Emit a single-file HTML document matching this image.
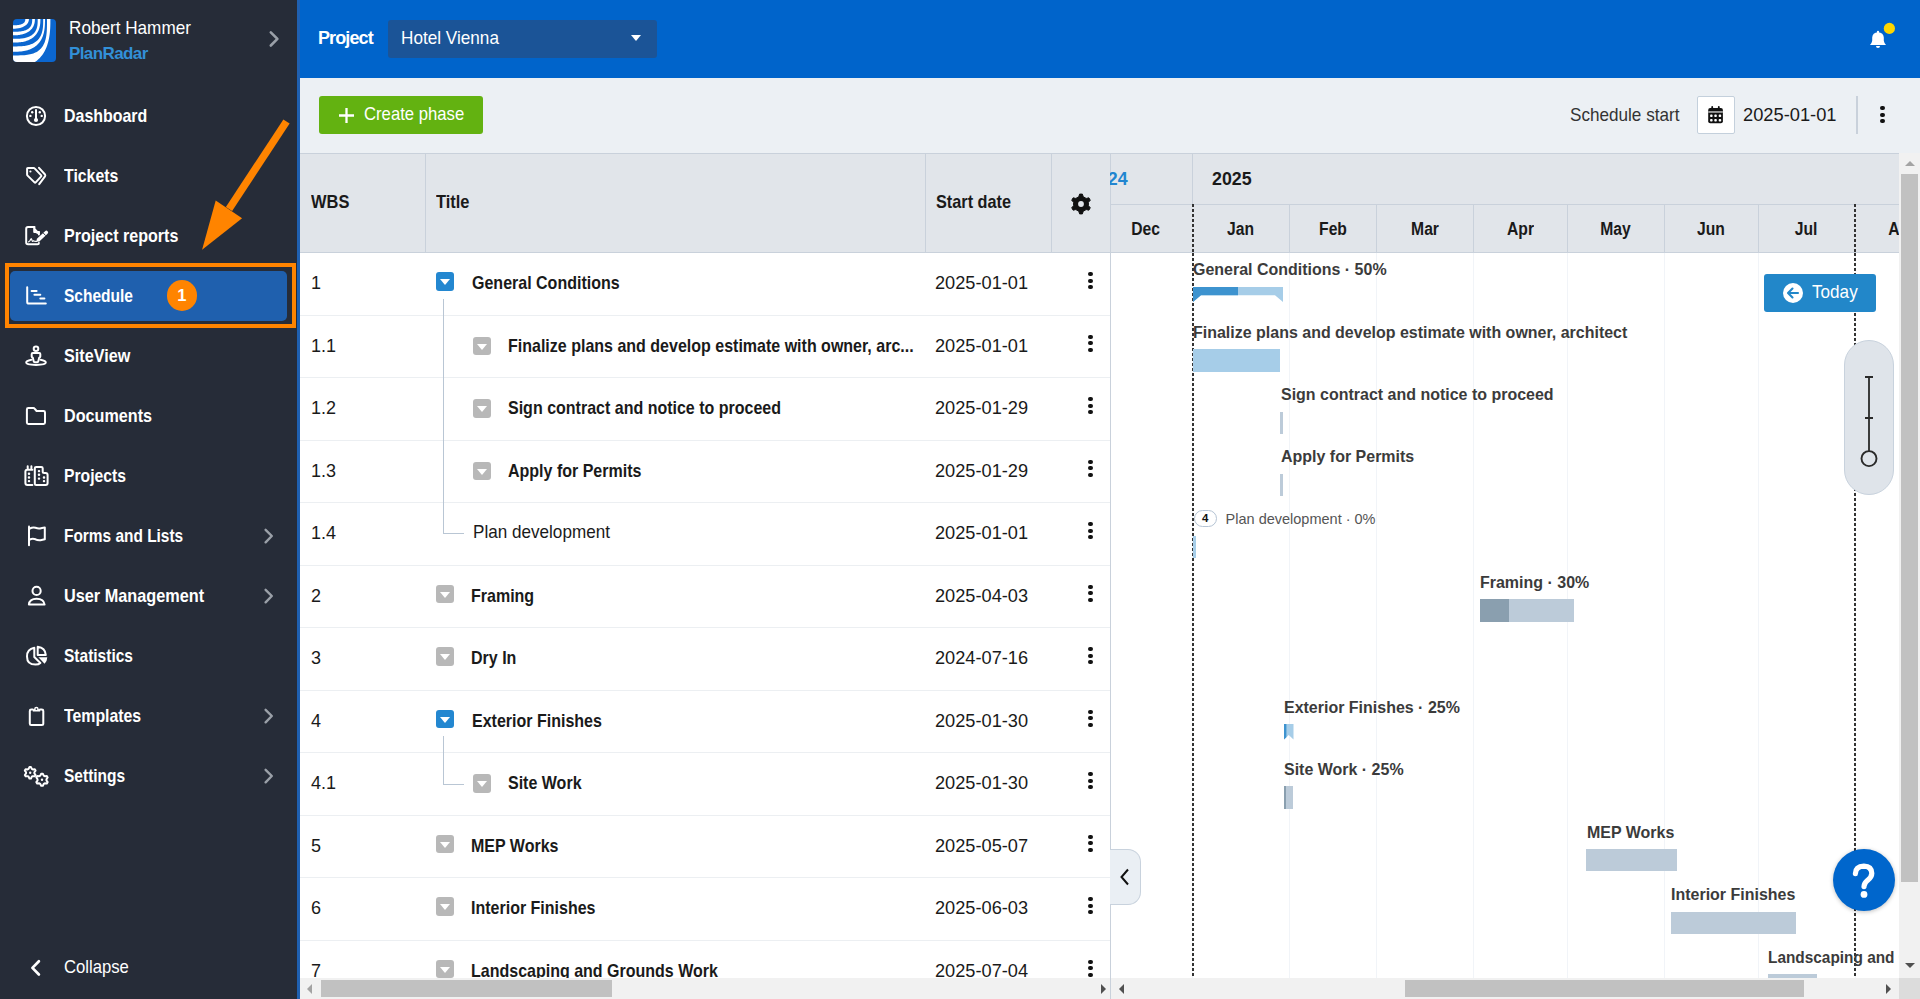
<!DOCTYPE html><html><head><meta charset="utf-8"><style>
*{box-sizing:border-box;margin:0;padding:0}
html,body{width:1920px;height:999px;overflow:hidden;font-family:"Liberation Sans",sans-serif;background:#fff;color:#1a1a1a}
.a{position:absolute}
.t{position:absolute;white-space:nowrap;line-height:20px;font-size:17px}
.b{font-weight:bold;letter-spacing:-0.45px}
.nav{position:absolute;left:64px;color:#fff;font-size:18.5px;font-weight:bold;line-height:20px;white-space:nowrap;transform-origin:0 0}
.ic{position:absolute;left:20px;width:32px;height:32px}
.vl{position:absolute;width:1px;background:#c9d1db}
.cb{position:absolute;width:18px;height:18.8px;border-radius:3px;background:#b8b8b8}
.cb.on{background:#2387d0}
.cb::after{content:"";position:absolute;left:3.5px;top:7px;border-left:5.5px solid transparent;border-right:5.5px solid transparent;border-top:6.3px solid #fff}
.kb{position:absolute;left:1088px;width:5px;height:18px}
.kb i{position:absolute;left:0.4px;width:4.2px;height:4.2px;border-radius:50%;background:#111}
.gl{position:absolute;font-size:17px;line-height:20px;color:#3b3b3b;font-weight:bold;letter-spacing:-0.5px;white-space:nowrap}
.bar{position:absolute;background:#bccbd9}
</style></head><body>
<div class="a" style="left:0;top:0;width:297px;height:999px;background:#262c38"></div>
<div class="a" style="left:297px;top:0;width:3px;height:999px;background:#1f60b0"></div>
<div class="a" style="left:13px;top:19px;width:43px;height:43px;border-radius:4px;background:#0b66cf;overflow:hidden"><svg width="43" height="43" viewBox="0 0 43 43"><path d="M15.90 0.00 L15.89 0.51 L15.86 0.96 L15.80 1.39 L15.72 1.80 L15.62 2.20 L15.50 2.58 L15.36 2.96 L15.19 3.34 L15.00 3.70 L14.80 4.05 L14.57 4.40 L14.32 4.73 L14.05 5.06 L13.75 5.38 L13.44 5.68 L13.11 5.98 L12.76 6.27 L12.40 6.55 L12.01 6.82 L11.60 7.08 L11.18 7.33 L10.74 7.56 L10.28 7.79 L9.81 8.00 L9.32 8.20 L8.81 8.39 L8.29 8.57 L7.76 8.73 L7.21 8.89 L6.64 9.03 L6.06 9.15 L5.47 9.27 L4.86 9.37 L4.24 9.46 L3.60 9.53 L2.94 9.59 L2.27 9.64 L1.57 9.67 L0.84 9.69 L0.00 9.70 L0.00 6.30 L1.02 6.30 L1.74 6.29 L2.37 6.27 L2.95 6.24 L3.50 6.21 L4.02 6.17 L4.51 6.12 L4.98 6.06 L5.44 6.00 L5.88 5.93 L6.30 5.85 L6.70 5.76 L7.09 5.67 L7.47 5.57 L7.83 5.47 L8.17 5.35 L8.51 5.23 L8.82 5.10 L9.13 4.97 L9.42 4.83 L9.70 4.68 L9.96 4.52 L10.21 4.36 L10.45 4.19 L10.67 4.01 L10.88 3.82 L11.07 3.63 L11.26 3.43 L11.42 3.22 L11.57 3.01 L11.71 2.79 L11.83 2.55 L11.94 2.31 L12.04 2.06 L12.12 1.79 L12.18 1.51 L12.23 1.21 L12.27 0.89 L12.29 0.52 L12.30 0.00 Z" fill="#fff"/><path d="M21.90 0.00 L21.89 1.04 L21.84 1.87 L21.77 2.64 L21.67 3.36 L21.54 4.06 L21.38 4.73 L21.20 5.37 L20.98 6.00 L20.74 6.61 L20.47 7.20 L20.18 7.77 L19.85 8.32 L19.50 8.86 L19.12 9.38 L18.72 9.88 L18.29 10.37 L17.83 10.84 L17.35 11.29 L16.84 11.72 L16.31 12.14 L15.75 12.53 L15.17 12.91 L14.56 13.27 L13.93 13.61 L13.28 13.93 L12.60 14.23 L11.91 14.51 L11.18 14.78 L10.44 15.02 L9.67 15.24 L8.88 15.44 L8.06 15.62 L7.22 15.78 L6.35 15.92 L5.45 16.03 L4.52 16.13 L3.54 16.20 L2.51 16.26 L1.39 16.29 L0.00 16.30 L0.00 12.80 L1.90 12.79 L3.12 12.77 L4.16 12.74 L5.10 12.69 L5.97 12.62 L6.79 12.55 L7.56 12.45 L8.30 12.35 L9.00 12.23 L9.67 12.10 L10.31 11.95 L10.92 11.79 L11.51 11.61 L12.08 11.42 L12.62 11.22 L13.14 11.00 L13.63 10.77 L14.11 10.53 L14.56 10.27 L14.99 9.99 L15.40 9.71 L15.79 9.40 L16.16 9.09 L16.50 8.76 L16.83 8.41 L17.13 8.05 L17.42 7.67 L17.68 7.28 L17.92 6.87 L18.14 6.45 L18.34 6.00 L18.52 5.53 L18.68 5.04 L18.82 4.53 L18.94 3.98 L19.03 3.40 L19.10 2.77 L19.16 2.08 L19.19 1.27 L19.20 0.00 Z" fill="#fff"/><path d="M27.40 0.00 L27.38 1.77 L27.33 3.08 L27.25 4.26 L27.13 5.35 L26.98 6.38 L26.79 7.37 L26.57 8.31 L26.32 9.22 L26.04 10.10 L25.72 10.94 L25.37 11.76 L24.98 12.55 L24.57 13.31 L24.12 14.04 L23.64 14.75 L23.13 15.43 L22.58 16.08 L22.01 16.71 L21.40 17.31 L20.77 17.89 L20.10 18.43 L19.40 18.96 L18.67 19.45 L17.91 19.92 L17.12 20.36 L16.30 20.77 L15.45 21.16 L14.57 21.52 L13.65 21.85 L12.71 22.15 L11.73 22.43 L10.71 22.67 L9.65 22.89 L8.56 23.08 L7.41 23.24 L6.21 23.37 L4.94 23.47 L3.58 23.54 L2.06 23.59 L0.00 23.60 L0.00 19.80 L2.65 19.79 L4.27 19.76 L5.64 19.71 L6.87 19.63 L8.00 19.54 L9.06 19.42 L10.05 19.28 L10.99 19.13 L11.88 18.95 L12.74 18.75 L13.55 18.53 L14.33 18.29 L15.07 18.02 L15.79 17.74 L16.47 17.43 L17.12 17.11 L17.75 16.76 L18.34 16.39 L18.91 16.00 L19.45 15.59 L19.96 15.16 L20.45 14.70 L20.91 14.22 L21.34 13.72 L21.75 13.20 L22.13 12.65 L22.48 12.08 L22.81 11.49 L23.11 10.86 L23.39 10.21 L23.64 9.53 L23.86 8.81 L24.06 8.06 L24.23 7.26 L24.37 6.41 L24.49 5.51 L24.58 4.52 L24.65 3.42 L24.69 2.12 L24.70 0.00 Z" fill="#fff"/><path d="M32.00 0.00 L31.98 2.97 L31.93 4.96 L31.84 6.70 L31.71 8.27 L31.54 9.75 L31.34 11.13 L31.11 12.45 L30.83 13.70 L30.52 14.90 L30.18 16.05 L29.80 17.16 L29.38 18.22 L28.92 19.24 L28.44 20.22 L27.91 21.16 L27.35 22.06 L26.76 22.92 L26.12 23.75 L25.46 24.54 L24.75 25.30 L24.02 26.01 L23.24 26.70 L22.43 27.34 L21.59 27.95 L20.70 28.52 L19.78 29.06 L18.83 29.56 L17.83 30.02 L16.79 30.45 L15.71 30.84 L14.58 31.19 L13.41 31.51 L12.18 31.79 L10.89 32.03 L9.54 32.23 L8.10 32.40 L6.55 32.53 L4.86 32.63 L2.91 32.68 L0.00 32.70 L0.00 27.40 L3.49 27.39 L5.53 27.34 L7.25 27.27 L8.77 27.17 L10.16 27.05 L11.45 26.89 L12.66 26.71 L13.80 26.50 L14.89 26.26 L15.92 25.99 L16.90 25.70 L17.84 25.37 L18.74 25.02 L19.59 24.64 L20.41 24.23 L21.19 23.79 L21.94 23.32 L22.65 22.83 L23.33 22.30 L23.97 21.75 L24.58 21.16 L25.16 20.55 L25.71 19.90 L26.22 19.23 L26.70 18.52 L27.16 17.77 L27.58 17.00 L27.96 16.19 L28.32 15.33 L28.65 14.44 L28.94 13.51 L29.21 12.52 L29.44 11.49 L29.64 10.39 L29.81 9.22 L29.95 7.95 L30.06 6.57 L30.14 5.02 L30.18 3.17 L30.20 0.00 Z" fill="#fff"/><path d="M37.40 0.00 L37.38 3.98 L37.31 6.78 L37.20 9.25 L37.05 11.52 L36.85 13.65 L36.60 15.68 L36.32 17.60 L35.98 19.45 L35.61 21.22 L35.19 22.93 L34.73 24.57 L34.22 26.15 L33.67 27.67 L33.08 29.13 L32.45 30.54 L31.77 31.89 L31.06 33.19 L30.29 34.44 L29.49 35.63 L28.65 36.77 L27.76 37.85 L26.83 38.88 L25.86 39.86 L24.85 40.78 L23.80 41.65 L22.70 42.46 L21.56 43.22 L20.37 43.92 L19.14 44.57 L17.86 45.16 L16.54 45.70 L15.15 46.18 L13.72 46.61 L12.21 46.98 L10.64 47.29 L8.98 47.54 L7.20 47.74 L5.28 47.89 L3.10 47.97 L0.00 48.00 L0.00 36.40 L5.06 36.38 L7.61 36.33 L9.65 36.25 L11.42 36.14 L13.00 35.99 L14.45 35.80 L15.79 35.59 L17.04 35.34 L18.22 35.06 L19.32 34.74 L20.37 34.39 L21.37 34.01 L22.31 33.59 L23.21 33.14 L24.06 32.66 L24.87 32.13 L25.64 31.58 L26.38 30.98 L27.07 30.35 L27.73 29.69 L28.35 28.98 L28.94 28.24 L29.49 27.45 L30.01 26.63 L30.50 25.76 L30.96 24.85 L31.38 23.89 L31.77 22.88 L32.13 21.81 L32.45 20.69 L32.75 19.50 L33.01 18.24 L33.24 16.90 L33.44 15.47 L33.61 13.92 L33.75 12.22 L33.86 10.33 L33.94 8.15 L33.98 5.42 L34.00 0.00 Z" fill="#fff"/></svg></div>
<div class="t" style="left:69px;top:17.9px;color:#fff;font-size:17.7px;transform:scaleX(0.969);transform-origin:0 0">Robert Hammer</div>
<div class="t b" style="left:69px;top:44px;color:#3290d8;font-size:17px;letter-spacing:-0.6px">PlanRadar</div>
<svg class="a" style="left:260px;top:25px" width="25" height="28" viewBox="260 25 25 28"><path d="M270.8 32.3 L277.4 38.9 L270.8 45.5" fill="none" stroke="#9aa0a8" stroke-width="2.6" stroke-linecap="round" stroke-linejoin="round"/></svg>
<div class="a" style="left:5px;top:263px;width:291px;height:65px;border:4px solid #ff8400"></div>
<div class="a" style="left:10px;top:271px;width:277px;height:50px;border-radius:5px;background:#1f60ae"></div>
<svg class="ic" style="top:100px" viewBox="0 0 32 32"><circle cx="16" cy="16" r="9.1" fill="none" stroke="#fff" stroke-width="2" stroke-linecap="round" stroke-linejoin="round"/><path d="M16 10 V19" fill="none" stroke="#fff" stroke-width="2" stroke-linecap="round" stroke-linejoin="round" stroke-width="1.8"/><circle cx="16" cy="20" r="2.1" fill="#fff"/><circle cx="12.2" cy="12.2" r="1.2" fill="#fff"/><circle cx="19.8" cy="12.2" r="1.2" fill="#fff"/><circle cx="10.4" cy="15.9" r="1.2" fill="#fff"/><circle cx="21.7" cy="15.9" r="1.2" fill="#fff"/></svg>
<div class="nav" style="top:106.2px;transform:scaleX(0.862)">Dashboard</div>
<svg class="ic" style="top:160px" viewBox="0 0 32 32"><path d="M7.1 8.6 Q7.1 7.9 7.8 7.9 H13.6 Q14.2 7.9 14.6 8.4 L21.2 15.4 Q21.6 15.9 21.2 16.4 L15.7 22.4 Q15.1 23 14.5 22.4 L7.6 15.6 Q7.1 15.1 7.1 14.5 Z" fill="none" stroke="#fff" stroke-width="2" stroke-linecap="round" stroke-linejoin="round"/><path d="M19 7.8 L25 14.5 Q25.6 15.5 25 16.4 L19.2 24.2" fill="none" stroke="#fff" stroke-width="2" stroke-linecap="round" stroke-linejoin="round"/><circle cx="10.4" cy="11.5" r="1.1" fill="#fff"/></svg>
<div class="nav" style="top:166.2px;transform:scaleX(0.856)">Tickets</div>
<svg class="ic" style="top:220px" viewBox="0 0 32 32"><path d="M14.5 7.1 H8 Q6.2 7.1 6.2 8.9 V22.6 Q6.2 24.3 8 24.3 H17.4 Q18.9 24.3 18.9 23" fill="none" stroke="#fff" stroke-width="2" stroke-linecap="round" stroke-linejoin="round"/><path d="M14 7 L19.2 12.5 L19.2 14.8 L14 12.3 Z" fill="#fff"/><path d="M14.2 7.2 V11.9 H18.8" fill="none" stroke="#fff" stroke-width="2" stroke-linecap="round" stroke-linejoin="round" stroke-width="1.6"/><path d="M18.9 12 V14.5" fill="none" stroke="#fff" stroke-width="2" stroke-linecap="round" stroke-linejoin="round"/><path d="M16.3 21.8 L19.36 21.42 L27.53 13.82 A1.8 1.8 0 0 0 25.07 11.18 L16.9 18.78 Z" fill="#fff"/><path d="M25.63 15.59 L23.17 12.95" stroke="#262c38" stroke-width="0.9"/><path d="M8.6 21.8 Q10 21.5 10.8 19 Q11.5 18 12 20.5 Q12.4 22 13.5 20.8 Q14.5 21.6 16.5 21.4" fill="none" stroke="#fff" stroke-width="1.2" stroke-linecap="round"/></svg>
<div class="nav" style="top:226.2px;transform:scaleX(0.869)">Project reports</div>
<svg class="ic" style="top:280px" viewBox="0 0 32 32"><path d="M7.2 7.3 V22 Q7.2 23.6 8.8 23.6 H25.8" fill="none" stroke="#fff" stroke-width="2" stroke-linecap="round" stroke-linejoin="round" stroke-width="2.4"/><path d="M11.6 10.9 H16.6 M14.4 14.7 H20.3 M20.3 18.5 H24.4" fill="none" stroke="#fff" stroke-width="2" stroke-linecap="round" stroke-linejoin="round" stroke-width="2.4"/></svg>
<div class="nav" style="top:286.2px;transform:scaleX(0.839)">Schedule</div>
<svg class="ic" style="top:340px" viewBox="0 0 32 32"><circle cx="16" cy="8.7" r="2.3" fill="none" stroke="#fff" stroke-width="2" stroke-linecap="round" stroke-linejoin="round" stroke-width="1.9"/><path d="M12.7 12.9 H19.3 Q20.3 12.9 20.3 13.9 V16.6 Q20.3 17.4 19.2 17.8 L18.3 21.2 Q18.1 22.2 17.1 22.2 H14.9 Q13.9 22.2 13.7 21.2 L12.8 17.8 Q11.7 17.4 11.7 16.6 V13.9 Q11.7 12.9 12.7 12.9 Z" fill="none" stroke="#fff" stroke-width="2" stroke-linecap="round" stroke-linejoin="round" stroke-width="1.9"/><path d="M11.4 19.8 Q6.2 20.8 6.2 22.6 Q6.2 24.9 16 24.9 Q25.8 24.9 25.8 22.6 Q25.8 20.8 20.6 19.8" fill="none" stroke="#fff" stroke-width="2" stroke-linecap="round" stroke-linejoin="round" stroke-width="1.9"/></svg>
<div class="nav" style="top:346.2px;transform:scaleX(0.874)">SiteView</div>
<svg class="ic" style="top:400px" viewBox="0 0 32 32"><path d="M6.9 9.5 Q6.9 8.1 8.3 8.1 H13.3 Q14.2 8.1 14.9 9 L16.6 11 H23.6 Q25 11 25 12.4 V22.6 Q25 24 23.6 24 H8.3 Q6.9 24 6.9 22.6 Z" fill="none" stroke="#fff" stroke-width="2" stroke-linecap="round" stroke-linejoin="round"/></svg>
<div class="nav" style="top:406.2px;transform:scaleX(0.874)">Documents</div>
<svg class="ic" style="top:460px" viewBox="0 0 32 32"><path d="M12.4 24.9 H7.4 Q5.4 24.9 5.4 22.9 V11.6 Q5.4 9.7 7.3 9.7 H12.4 M7.7 9.6 V6.3 M11.4 9.6 V6.3" fill="none" stroke="#fff" stroke-width="2" stroke-linecap="round" stroke-linejoin="round"/><path d="M16.2 24.9 Q14.8 24.9 14.8 23.4 V8.3 Q14.8 6.9 16.2 6.9 H21.3 Q22.7 6.9 22.7 8.3 V11.6 Q22.7 13.1 24.2 13.1 H25.6 Q27.6 13.1 27.6 15.1 V22.9 Q27.6 24.9 25.6 24.9 Z" fill="none" stroke="#fff" stroke-width="2" stroke-linecap="round" stroke-linejoin="round"/><g fill="#fff"><rect x="7.8" y="12.6" width="2.4" height="2.4" rx="1"/><rect x="7.8" y="16.3" width="2.4" height="2.4" rx="1"/><rect x="7.8" y="19.9" width="2.4" height="2.4" rx="1"/><rect x="17.8" y="9.9" width="2.4" height="2.4" rx="1"/><rect x="17.8" y="13.6" width="2.4" height="2.4" rx="1"/><rect x="17.8" y="17.4" width="2.4" height="2.4" rx="1"/><rect x="22.8" y="16.3" width="2.4" height="2.4" rx="1"/><rect x="22.8" y="19.9" width="2.4" height="2.4" rx="1"/></g></svg>
<div class="nav" style="top:466.2px;transform:scaleX(0.849)">Projects</div>
<svg class="ic" style="top:520px" viewBox="0 0 32 32"><path d="M9 6.6 V25.2" fill="none" stroke="#fff" stroke-width="2" stroke-linecap="round" stroke-linejoin="round" stroke-width="2.1"/><path d="M9.9 8.5 Q12.5 7.2 15.5 7.8 Q18.5 9 21 8.2 Q23.5 7.6 24.8 7.6 V19.3 Q22.5 19.8 20.5 20.2 Q17.5 20.5 15.5 19.3 Q12.5 18.3 9.9 19.5" fill="none" stroke="#fff" stroke-width="2" stroke-linecap="round" stroke-linejoin="round"/></svg>
<div class="nav" style="top:526.2px;transform:scaleX(0.834)">Forms and Lists</div>
<svg class="a" style="left:258px;top:524px" width="20" height="24" viewBox="258 524 20 24"><path d="M265.6 529.8 L271.8 536 L265.6 542.3" fill="none" stroke="#9aa0a8" stroke-width="2.4" stroke-linecap="round" stroke-linejoin="round"/></svg>
<svg class="ic" style="top:580px" viewBox="0 0 32 32"><circle cx="16.6" cy="10.9" r="4.1" fill="none" stroke="#fff" stroke-width="2" stroke-linecap="round" stroke-linejoin="round"/><path d="M8.9 24.6 Q9.5 18.8 16.6 18.8 Q23.8 18.8 24.6 24.6 Z" fill="none" stroke="#fff" stroke-width="2" stroke-linecap="round" stroke-linejoin="round"/></svg>
<div class="nav" style="top:586.2px;transform:scaleX(0.88)">User Management</div>
<svg class="a" style="left:258px;top:584px" width="20" height="24" viewBox="258 584 20 24"><path d="M265.6 589.8 L271.8 596 L265.6 602.3" fill="none" stroke="#9aa0a8" stroke-width="2.4" stroke-linecap="round" stroke-linejoin="round"/></svg>
<svg class="ic" style="top:640px" viewBox="0 0 32 32"><path d="M14.3 7.8 Q7 9.2 7 16.4 Q7 24.6 15.5 24.6 Q18.6 24.6 20.4 23 L14.3 17 Z" fill="none" stroke="#fff" stroke-width="2" stroke-linecap="round" stroke-linejoin="round"/><path d="M17.7 6.8 V15.1 H25.8 Q25.2 7.6 17.7 6.8 Z" fill="none" stroke="#fff" stroke-width="2" stroke-linecap="round" stroke-linejoin="round"/><path d="M18.4 17.2 H27.3 Q27.3 20.8 24.5 23.7 Z" fill="#fff"/></svg>
<div class="nav" style="top:646.2px;transform:scaleX(0.838)">Statistics</div>
<svg class="ic" style="top:700px" viewBox="0 0 32 32"><path d="M12.8 9.6 H11.2 Q9.8 9.6 9.8 11 V23.5 Q9.8 25 11.2 25 H21.8 Q23.3 25 23.3 23.5 V11 Q23.3 9.6 21.8 9.6 H20" fill="none" stroke="#fff" stroke-width="2" stroke-linecap="round" stroke-linejoin="round"/><path d="M12.8 9.2 V11.6 H20.2 V9.2 H18.8 Q18.5 6.8 16.4 6.8 Q14.2 6.8 14 9.2 Z" fill="#fff"/><circle cx="16.4" cy="9.1" r="0.9" fill="#262c38"/></svg>
<div class="nav" style="top:706.2px;transform:scaleX(0.856)">Templates</div>
<svg class="a" style="left:258px;top:704px" width="20" height="24" viewBox="258 704 20 24"><path d="M265.6 709.8 L271.8 716 L265.6 722.3" fill="none" stroke="#9aa0a8" stroke-width="2.4" stroke-linecap="round" stroke-linejoin="round"/></svg>
<svg class="ic" style="top:760px" viewBox="0 0 32 32"><path d="M9.44 7.05 L10.96 7.05 L11.81 8.92 L12.76 9.47 L14.80 9.27 L15.56 10.58 L14.36 12.25 L14.36 13.35 L15.56 15.02 L14.80 16.33 L12.76 16.13 L11.81 16.68 L10.96 18.55 L9.44 18.55 L8.59 16.68 L7.64 16.13 L5.60 16.33 L4.84 15.02 L6.04 13.35 L6.04 12.25 L4.84 10.58 L5.60 9.27 L7.64 9.47 L8.59 8.92 Z" fill="none" stroke="#fff" stroke-width="2" stroke-linecap="round" stroke-linejoin="round" stroke-width="1.8"/><circle cx="10.2" cy="12.8" r="1.2" fill="#fff"/><path d="M21.20 13.75 L22.80 13.75 L23.72 15.64 L24.74 16.23 L26.84 16.09 L27.64 17.47 L26.46 19.21 L26.46 20.39 L27.64 22.13 L26.84 23.51 L24.74 23.37 L23.72 23.96 L22.80 25.85 L21.20 25.85 L20.28 23.96 L19.26 23.37 L17.16 23.51 L16.36 22.13 L17.54 20.39 L17.54 19.21 L16.36 17.47 L17.16 16.09 L19.26 16.23 L20.28 15.64 Z" fill="none" stroke="#fff" stroke-width="2" stroke-linecap="round" stroke-linejoin="round" stroke-width="1.8"/><circle cx="22" cy="19.8" r="1.2" fill="#fff"/></svg>
<div class="nav" style="top:766.2px;transform:scaleX(0.838)">Settings</div>
<svg class="a" style="left:258px;top:764px" width="20" height="24" viewBox="258 764 20 24"><path d="M265.6 769.8 L271.8 776 L265.6 782.3" fill="none" stroke="#9aa0a8" stroke-width="2.4" stroke-linecap="round" stroke-linejoin="round"/></svg>
<div class="a" style="left:166.5px;top:280.3px;width:30.5px;height:30.5px;border-radius:50%;background:#ff8400"></div><div class="a" style="left:166.5px;top:280px;width:30.5px;color:#fff;font-size:16.5px;font-weight:bold;line-height:30px;text-align:center">1</div>
<svg class="a" style="left:25px;top:955px" width="20" height="25" viewBox="25 955 20 25"><path d="M38.9 961.3 L32.4 967.9 L38.9 974.5" fill="none" stroke="#fff" stroke-width="2.7" stroke-linecap="round" stroke-linejoin="round"/></svg>
<div class="t" style="left:64px;top:957.2px;color:#fff;font-size:17.7px;transform:scaleX(0.943);transform-origin:0 0">Collapse</div>
<svg class="a" style="left:190px;top:110px" width="110" height="150" viewBox="190 110 110 150"><path d="M286.5 121.5 L229 209" stroke="#ff8400" stroke-width="7.5" stroke-linecap="butt"/><path d="M215.7 200.4 L242.1 218.3 L202.1 249.7 Z" fill="#ff8400"/></svg>
<div class="a" style="left:300px;top:0;width:1620px;height:78px;background:#0064cb"></div>
<div class="t b" style="left:318px;top:28px;color:#fff;font-size:18px;letter-spacing:-0.9px">Project</div>
<div class="a" style="left:388px;top:20px;width:269px;height:38px;border-radius:3px;background:#1b5497"></div>
<div class="t" style="left:401px;top:27.8px;color:#fff;font-size:17.7px;transform:scaleX(0.97);transform-origin:0 0">Hotel Vienna</div>
<div class="a" style="left:631px;top:35px;width:0;height:0;border-left:5.5px solid transparent;border-right:5.5px solid transparent;border-top:6.5px solid #fff"></div>
<svg class="a" style="left:1860px;top:15px" width="40" height="40" viewBox="0 0 40 40"><path d="M10 29.9 H26 Q24.2 28.4 23.8 25.8 V22.5 Q23.6 17.9 18 17.3 Q12.4 17.9 12.2 22.5 V25.8 Q11.8 28.4 10 29.9 Z" fill="#fff"/><rect x="16.9" y="15.7" width="2.2" height="3" rx="1.1" fill="#fff"/><path d="M16 31 H20 Q20 33.1 18 33.1 Q16 33.1 16 31 Z" fill="#fff"/><circle cx="29.4" cy="13.4" r="5.6" fill="#ffd600"/></svg>
<div class="a" style="left:300px;top:78px;width:1620px;height:75px;background:#ecf0f4"></div>
<div class="a" style="left:319px;top:96px;width:164px;height:38px;border-radius:3px;background:#63b211"></div>
<svg class="a" style="left:338px;top:107px" width="17" height="17" viewBox="0 0 17 17"><path d="M8.5 1 V16 M1 8.5 H16" stroke="#fff" stroke-width="2.3"/></svg>
<div class="t" style="left:364px;top:103.9px;color:#fff;font-size:17.7px;transform:scaleX(0.944);transform-origin:0 0">Create phase</div>
<div class="t" style="left:1570px;top:104.9px;color:#333;font-size:17.7px;transform:scaleX(0.968);transform-origin:0 0">Schedule start</div>
<div class="a" style="left:1697px;top:96px;width:38px;height:38px;background:#fff;border:1px solid #c4d0dc;border-radius:2px"></div>
<svg class="a" style="left:1695px;top:94px" width="42" height="42" viewBox="0 0 42 42"><rect x="13.2" y="14" width="14.7" height="15.2" rx="2" fill="#111"/><rect x="13.2" y="17" width="14.7" height="1.9" fill="#999"/><rect x="16.3" y="12" width="1.8" height="3.5" rx="0.9" fill="#111"/><rect x="22.9" y="12" width="1.8" height="3.5" rx="0.9" fill="#111"/><g fill="#fff"><rect x="15.1" y="20.6" width="2.5" height="2.5" rx="0.8"/><rect x="19.3" y="20.6" width="2.5" height="2.5" rx="0.8"/><rect x="23.7" y="20.6" width="2.5" height="2.5" rx="0.8"/><rect x="15.1" y="25" width="2.5" height="2.5" rx="0.8"/><rect x="19.3" y="25" width="2.5" height="2.5" rx="0.8"/><rect x="23.7" y="25" width="2.5" height="2.5" rx="0.8"/></g></svg>
<div class="t" style="left:1743px;top:104.7px;color:#1a1a1a;font-size:18.3px">2025-01-01</div>
<div class="a" style="left:1856px;top:96px;width:2px;height:38px;background:#c9d1db"></div>
<div class="kb" style="left:1880px;top:106px"><i style="top:0"></i><i style="top:6.5px"></i><i style="top:13px"></i></div>
<div class="a" style="left:300px;top:153px;width:1599px;height:100px;background:#e1e5ea;border-top:1px solid #c9d1db;border-bottom:1px solid #c9d1db"></div>
<div class="vl" style="left:425px;top:153px;height:100px"></div>
<div class="vl" style="left:925px;top:153px;height:100px"></div>
<div class="vl" style="left:1051px;top:153px;height:100px"></div>
<div class="vl" style="left:1110px;top:153px;height:100px"></div>
<div class="t" style="left:311px;top:192px;font-size:17.7px;font-weight:bold;transform:scaleX(0.93);transform-origin:0 0">WBS</div>
<div class="t" style="left:436px;top:192px;font-size:17.7px;font-weight:bold;transform:scaleX(0.93);transform-origin:0 0">Title</div>
<div class="t" style="left:936px;top:192px;font-size:17.7px;font-weight:bold;transform:scaleX(0.92);transform-origin:0 0">Start date</div>
<svg class="a" style="left:1069px;top:192px" width="24" height="24" viewBox="0 0 24 24"><path d="" /></svg>
<svg class="a" style="left:1069px;top:192px" width="24" height="24" viewBox="0 0 24 24"><path d="M9.78 4.73 L10.61 2.10 L13.39 2.10 L14.22 4.73 L17.18 6.44 L19.88 5.84 L21.27 8.25 L19.41 10.29 L19.41 13.71 L21.27 15.75 L19.88 18.16 L17.18 17.56 L14.22 19.27 L13.39 21.90 L10.61 21.90 L9.78 19.27 L6.82 17.56 L4.12 18.16 L2.73 15.75 L4.59 13.71 L4.59 10.29 L2.73 8.25 L4.12 5.84 L6.82 6.44 Z" fill="#111" stroke="#111" stroke-width="1" stroke-linejoin="round"/><circle cx="12" cy="12" r="2.9" fill="#e1e5ea"/></svg>
<div class="a" style="left:300px;top:253px;width:810px;height:725px;overflow:hidden">
<div class="t" style="left:11px;top:20px;font-size:18px">1</div>
<div class="cb on" style="left:136px;top:19.0px"></div>
<div class="t" style="left:172px;top:20px;font-size:17.7px;font-weight:bold;transform:scaleX(0.905);transform-origin:0 0">General Conditions</div>
<div class="t" style="left:635px;top:20px;font-size:18.2px">2025-01-01</div>
<div class="kb" style="left:788px;top:19.15px"><i style="top:0"></i><i style="top:6.45px"></i><i style="top:12.9px"></i></div>
<div class="a" style="left:0;top:61.5px;width:810px;height:1px;background:#eceff2"></div>
<div class="t" style="left:11px;top:83px;font-size:18px">1.1</div>
<div class="cb " style="left:173px;top:83.5px"></div>
<div class="t" style="left:208px;top:83px;font-size:17.7px;font-weight:bold;transform:scaleX(0.905);transform-origin:0 0">Finalize plans and develop estimate with owner, arc...</div>
<div class="t" style="left:635px;top:83px;font-size:18.2px">2025-01-01</div>
<div class="kb" style="left:788px;top:81.65px"><i style="top:0"></i><i style="top:6.45px"></i><i style="top:12.9px"></i></div>
<div class="a" style="left:0;top:124.0px;width:810px;height:1px;background:#eceff2"></div>
<div class="t" style="left:11px;top:145px;font-size:18px">1.2</div>
<div class="cb " style="left:173px;top:146.0px"></div>
<div class="t" style="left:208px;top:145px;font-size:17.7px;font-weight:bold;transform:scaleX(0.905);transform-origin:0 0">Sign contract and notice to proceed</div>
<div class="t" style="left:635px;top:145px;font-size:18.2px">2025-01-29</div>
<div class="kb" style="left:788px;top:144.15px"><i style="top:0"></i><i style="top:6.45px"></i><i style="top:12.9px"></i></div>
<div class="a" style="left:0;top:186.5px;width:810px;height:1px;background:#eceff2"></div>
<div class="t" style="left:11px;top:208px;font-size:18px">1.3</div>
<div class="cb " style="left:173px;top:208.5px"></div>
<div class="t" style="left:208px;top:208px;font-size:17.7px;font-weight:bold;transform:scaleX(0.905);transform-origin:0 0">Apply for Permits</div>
<div class="t" style="left:635px;top:208px;font-size:18.2px">2025-01-29</div>
<div class="kb" style="left:788px;top:206.65px"><i style="top:0"></i><i style="top:6.45px"></i><i style="top:12.9px"></i></div>
<div class="a" style="left:0;top:249.0px;width:810px;height:1px;background:#eceff2"></div>
<div class="t" style="left:11px;top:270px;font-size:18px">1.4</div>
<div class="t" style="left:173px;top:269.2px;font-size:17.7px;transform:scaleX(0.967);transform-origin:0 0">Plan development</div>
<div class="t" style="left:635px;top:270px;font-size:18.2px">2025-01-01</div>
<div class="kb" style="left:788px;top:269.15px"><i style="top:0"></i><i style="top:6.45px"></i><i style="top:12.9px"></i></div>
<div class="a" style="left:0;top:311.5px;width:810px;height:1px;background:#eceff2"></div>
<div class="t" style="left:11px;top:333px;font-size:18px">2</div>
<div class="cb " style="left:136px;top:331.5px"></div>
<div class="t" style="left:171px;top:333px;font-size:17.7px;font-weight:bold;transform:scaleX(0.905);transform-origin:0 0">Framing</div>
<div class="t" style="left:635px;top:333px;font-size:18.2px">2025-04-03</div>
<div class="kb" style="left:788px;top:331.65px"><i style="top:0"></i><i style="top:6.45px"></i><i style="top:12.9px"></i></div>
<div class="a" style="left:0;top:374.0px;width:810px;height:1px;background:#eceff2"></div>
<div class="t" style="left:11px;top:395px;font-size:18px">3</div>
<div class="cb " style="left:136px;top:394.0px"></div>
<div class="t" style="left:171px;top:395px;font-size:17.7px;font-weight:bold;transform:scaleX(0.905);transform-origin:0 0">Dry In</div>
<div class="t" style="left:635px;top:395px;font-size:18.2px">2024-07-16</div>
<div class="kb" style="left:788px;top:394.15px"><i style="top:0"></i><i style="top:6.45px"></i><i style="top:12.9px"></i></div>
<div class="a" style="left:0;top:436.5px;width:810px;height:1px;background:#eceff2"></div>
<div class="t" style="left:11px;top:458px;font-size:18px">4</div>
<div class="cb on" style="left:136px;top:456.5px"></div>
<div class="t" style="left:172px;top:458px;font-size:17.7px;font-weight:bold;transform:scaleX(0.905);transform-origin:0 0">Exterior Finishes</div>
<div class="t" style="left:635px;top:458px;font-size:18.2px">2025-01-30</div>
<div class="kb" style="left:788px;top:456.65px"><i style="top:0"></i><i style="top:6.45px"></i><i style="top:12.9px"></i></div>
<div class="a" style="left:0;top:499.0px;width:810px;height:1px;background:#eceff2"></div>
<div class="t" style="left:11px;top:520px;font-size:18px">4.1</div>
<div class="cb " style="left:173px;top:521.0px"></div>
<div class="t" style="left:208px;top:520px;font-size:17.7px;font-weight:bold;transform:scaleX(0.905);transform-origin:0 0">Site Work</div>
<div class="t" style="left:635px;top:520px;font-size:18.2px">2025-01-30</div>
<div class="kb" style="left:788px;top:519.15px"><i style="top:0"></i><i style="top:6.45px"></i><i style="top:12.9px"></i></div>
<div class="a" style="left:0;top:561.5px;width:810px;height:1px;background:#eceff2"></div>
<div class="t" style="left:11px;top:583px;font-size:18px">5</div>
<div class="cb " style="left:136px;top:581.5px"></div>
<div class="t" style="left:171px;top:583px;font-size:17.7px;font-weight:bold;transform:scaleX(0.905);transform-origin:0 0">MEP Works</div>
<div class="t" style="left:635px;top:583px;font-size:18.2px">2025-05-07</div>
<div class="kb" style="left:788px;top:581.65px"><i style="top:0"></i><i style="top:6.45px"></i><i style="top:12.9px"></i></div>
<div class="a" style="left:0;top:624.0px;width:810px;height:1px;background:#eceff2"></div>
<div class="t" style="left:11px;top:645px;font-size:18px">6</div>
<div class="cb " style="left:136px;top:644.0px"></div>
<div class="t" style="left:171px;top:645px;font-size:17.7px;font-weight:bold;transform:scaleX(0.905);transform-origin:0 0">Interior Finishes</div>
<div class="t" style="left:635px;top:645px;font-size:18.2px">2025-06-03</div>
<div class="kb" style="left:788px;top:644.15px"><i style="top:0"></i><i style="top:6.45px"></i><i style="top:12.9px"></i></div>
<div class="a" style="left:0;top:686.5px;width:810px;height:1px;background:#eceff2"></div>
<div class="t" style="left:11px;top:708px;font-size:18px">7</div>
<div class="cb " style="left:136px;top:706.5px"></div>
<div class="t" style="left:171px;top:708px;font-size:17.7px;font-weight:bold;transform:scaleX(0.905);transform-origin:0 0">Landscaping and Grounds Work</div>
<div class="t" style="left:635px;top:708px;font-size:18.2px">2025-07-04</div>
<div class="kb" style="left:788px;top:706.65px"><i style="top:0"></i><i style="top:6.45px"></i><i style="top:12.9px"></i></div>
<div class="a" style="left:142.5px;top:46px;width:1px;height:234px;background:#b9c6d4"></div>
<div class="a" style="left:142.5px;top:280px;width:21px;height:1px;background:#b9c6d4"></div>
<div class="a" style="left:142.5px;top:483px;width:1px;height:48px;background:#b9c6d4"></div>
<div class="a" style="left:142.5px;top:531px;width:21px;height:1px;background:#b9c6d4"></div>
</div>
<div class="a" style="left:1110px;top:253px;width:789px;height:725px;overflow:hidden">
<div class="a" style="left:82.0px;top:0;width:1px;height:725px;background:#f1f4f8"></div>
<div class="a" style="left:178.9px;top:0;width:1px;height:725px;background:#f1f4f8"></div>
<div class="a" style="left:266.4px;top:0;width:1px;height:725px;background:#f1f4f8"></div>
<div class="a" style="left:363.3px;top:0;width:1px;height:725px;background:#f1f4f8"></div>
<div class="a" style="left:457.1px;top:0;width:1px;height:725px;background:#f1f4f8"></div>
<div class="a" style="left:554.0px;top:0;width:1px;height:725px;background:#f1f4f8"></div>
<div class="a" style="left:647.8px;top:0;width:1px;height:725px;background:#f1f4f8"></div>
<div class="a" style="left:744.7px;top:0;width:1px;height:725px;background:#f1f4f8"></div>
<div class="a" style="left:82.0px;top:0;width:2px;height:725px;background:repeating-linear-gradient(to bottom,#333 0 2.6px,transparent 2.6px 5px)"></div>
<div class="a" style="left:744.3px;top:0;width:2px;height:725px;background:repeating-linear-gradient(to bottom,#333 0 2.6px,transparent 2.6px 5px)"></div>
<div class="a" style="left:0;top:0;width:1px;height:725px;background:#c9d1db"></div>
<div class="a" style="left:83.0px;top:6.5px;white-space:nowrap;font-size:17.1px;line-height:20px;color:#3b3b3b;font-weight:bold;letter-spacing:0px;transform:scaleX(0.935);transform-origin:0 0">General Conditions · 50%</div>
<svg class="a" style="left:83px;top:34px" width="91" height="16" viewBox="0 0 91 16"><path d="M0 0 H90 V15 L82 8.3 H8 L0 15 Z" fill="#a6cde8"/><path d="M0 0 H45 V8.3 H8 L0 15 Z" fill="#3d93cf"/></svg>
<div class="a" style="left:83.0px;top:69.6px;white-space:nowrap;font-size:17.1px;line-height:20px;color:#3b3b3b;font-weight:bold;letter-spacing:0px;transform:scaleX(0.935);transform-origin:0 0">Finalize plans and develop estimate with owner, architect</div>
<div class="a" style="left:83.0px;top:96.0px;width:87.0px;height:22.5px;background:#a6cde8"></div>
<div class="a" style="left:170.5px;top:131.7px;white-space:nowrap;font-size:17.1px;line-height:20px;color:#3b3b3b;font-weight:bold;letter-spacing:0px;transform:scaleX(0.935);transform-origin:0 0">Sign contract and notice to proceed</div>
<div class="a" style="left:170.2px;top:159.0px;width:3.0px;height:22.0px;background:#bccbd9"></div>
<div class="a" style="left:170.5px;top:194.4px;white-space:nowrap;font-size:17.1px;line-height:20px;color:#3b3b3b;font-weight:bold;letter-spacing:0px;transform:scaleX(0.935);transform-origin:0 0">Apply for Permits</div>
<div class="a" style="left:170.2px;top:221.0px;width:3.0px;height:22.3px;background:#bccbd9"></div>
<div class="a" style="left:83.70000000000005px;top:257.2px;width:23px;height:16.5px;border:1px solid #b5c4d4;border-radius:9px;background:#fff;font-size:11.5px;font-weight:bold;line-height:14.5px;text-align:center;color:#111">4</div>
<div class="a" style="left:115.6px;top:255.6px;white-space:nowrap;font-size:14.5px;line-height:20px;color:#555;font-weight:normal;letter-spacing:0px;transform:scaleX(1);transform-origin:0 0">Plan development · 0%</div>
<div class="a" style="left:83.0px;top:282.5px;width:2.6px;height:22.3px;background:#a6cde8"></div>
<div class="a" style="left:370.3px;top:319.8px;white-space:nowrap;font-size:17.1px;line-height:20px;color:#3b3b3b;font-weight:bold;letter-spacing:0px;transform:scaleX(0.935);transform-origin:0 0">Framing · 30%</div>
<div class="a" style="left:370.3px;top:346.0px;width:93.4px;height:23.0px;background:#bccbd9"></div>
<div class="a" style="left:370.3px;top:346.0px;width:28.7px;height:23.0px;background:#8a9faf"></div>
<div class="a" style="left:173.5px;top:445.3px;white-space:nowrap;font-size:17.1px;line-height:20px;color:#3b3b3b;font-weight:bold;letter-spacing:0px;transform:scaleX(0.935);transform-origin:0 0">Exterior Finishes · 25%</div>
<svg class="a" style="left:173.5px;top:471px" width="10" height="16" viewBox="0 0 10 16"><path d="M0 0 H9.5 V15.6 L4.75 11 L0 15.6 Z" fill="#a6cde8"/><path d="M0 0 H2.4 V13.3 L0 15.6 Z" fill="#3d93cf"/></svg>
<div class="a" style="left:173.5px;top:507.2px;white-space:nowrap;font-size:17.1px;line-height:20px;color:#3b3b3b;font-weight:bold;letter-spacing:0px;transform:scaleX(0.935);transform-origin:0 0">Site Work · 25%</div>
<div class="a" style="left:173.5px;top:533.4px;width:9.5px;height:22.6px;background:#bccbd9"></div>
<div class="a" style="left:173.5px;top:533.4px;width:2.5px;height:22.6px;background:#8a9faf"></div>
<div class="a" style="left:476.6px;top:570.1px;white-space:nowrap;font-size:17.1px;line-height:20px;color:#3b3b3b;font-weight:bold;letter-spacing:0px;transform:scaleX(0.935);transform-origin:0 0">MEP Works</div>
<div class="a" style="left:476.0px;top:596.2px;width:91.0px;height:22.3px;background:#bccbd9"></div>
<div class="a" style="left:561.2px;top:632.1px;white-space:nowrap;font-size:17.1px;line-height:20px;color:#3b3b3b;font-weight:bold;letter-spacing:0px;transform:scaleX(0.935);transform-origin:0 0">Interior Finishes</div>
<div class="a" style="left:561.0px;top:659.2px;width:124.7px;height:21.8px;background:#bccbd9"></div>
<div class="a" style="left:658.0px;top:694.6px;white-space:nowrap;font-size:17.1px;line-height:20px;color:#3b3b3b;font-weight:bold;letter-spacing:0px;transform:scaleX(0.9);transform-origin:0 0">Landscaping and Grounds Work</div>
<div class="a" style="left:658.0px;top:721.2px;width:49.4px;height:15.8px;background:#bccbd9"></div>
</div>
<div class="a" style="left:1110px;top:154px;width:789px;height:98px;overflow:hidden">
<div class="a" style="left:82px;top:0;width:1px;height:50px;background:#c9d1db"></div>
<div class="a" style="left:0;top:49.5px;width:789px;height:1px;background:#c9d1db"></div>
<div class="a" style="left:178.9px;top:50px;width:1px;height:48px;background:#c9d1db"></div>
<div class="a" style="left:266.4px;top:50px;width:1px;height:48px;background:#c9d1db"></div>
<div class="a" style="left:363.3px;top:50px;width:1px;height:48px;background:#c9d1db"></div>
<div class="a" style="left:457.1px;top:50px;width:1px;height:48px;background:#c9d1db"></div>
<div class="a" style="left:554.0px;top:50px;width:1px;height:48px;background:#c9d1db"></div>
<div class="a" style="left:647.8px;top:50px;width:1px;height:48px;background:#c9d1db"></div>
<div class="a" style="left:82.0px;top:50px;width:2px;height:48px;background:repeating-linear-gradient(to bottom,#333 0 2.6px,transparent 2.6px 5px)"></div>
<div class="a" style="left:744.3px;top:50px;width:2px;height:48px;background:repeating-linear-gradient(to bottom,#333 0 2.6px,transparent 2.6px 5px)"></div>
<div class="t" style="left:-22px;top:15px;font-size:18px;font-weight:bold;color:#2185d0;transform:scaleX(0.99);transform-origin:0 0">2024</div>
<div class="t" style="left:101.70000000000005px;top:15px;font-size:18px;font-weight:bold;transform:scaleX(0.99);transform-origin:0 0">2025</div>
<div class="t" style="left:-11.8px;width:93.8px;text-align:center;top:65px;font-size:18px;font-weight:bold"><span style="display:inline-block;transform:scaleX(0.87)">Dec</span></div>
<div class="t" style="left:82.0px;width:96.9px;text-align:center;top:65px;font-size:18px;font-weight:bold"><span style="display:inline-block;transform:scaleX(0.87)">Jan</span></div>
<div class="t" style="left:178.9px;width:87.5px;text-align:center;top:65px;font-size:18px;font-weight:bold"><span style="display:inline-block;transform:scaleX(0.87)">Feb</span></div>
<div class="t" style="left:266.4px;width:96.9px;text-align:center;top:65px;font-size:18px;font-weight:bold"><span style="display:inline-block;transform:scaleX(0.87)">Mar</span></div>
<div class="t" style="left:363.3px;width:93.8px;text-align:center;top:65px;font-size:18px;font-weight:bold"><span style="display:inline-block;transform:scaleX(0.87)">Apr</span></div>
<div class="t" style="left:457.1px;width:96.9px;text-align:center;top:65px;font-size:18px;font-weight:bold"><span style="display:inline-block;transform:scaleX(0.87)">May</span></div>
<div class="t" style="left:554.0px;width:93.8px;text-align:center;top:65px;font-size:18px;font-weight:bold"><span style="display:inline-block;transform:scaleX(0.87)">Jun</span></div>
<div class="t" style="left:647.8px;width:96.9px;text-align:center;top:65px;font-size:18px;font-weight:bold"><span style="display:inline-block;transform:scaleX(0.87)">Jul</span></div>
<div class="t" style="left:744.7px;width:96.9px;text-align:center;top:65px;font-size:18px;font-weight:bold"><span style="display:inline-block;transform:scaleX(0.87)">Aug</span></div>
</div>
<div class="a" style="left:1764px;top:274px;width:112px;height:37.5px;border-radius:3px;background:#2287c9"></div>
<svg class="a" style="left:1783px;top:283px" width="20" height="20" viewBox="0 0 20 20"><circle cx="10" cy="10" r="10" fill="#fff"/><path d="M15 10 H5.5 M9.5 5.5 L5 10 L9.5 14.5" fill="none" stroke="#2287c9" stroke-width="2.1" stroke-linecap="round" stroke-linejoin="round"/></svg>
<div class="t" style="left:1812px;top:282px;color:#fff;font-size:17.7px;transform:scaleX(0.968);transform-origin:0 0">Today</div>
<div class="a" style="left:1844px;top:340px;width:50px;height:155px;border-radius:25px;background:#dfe4ea;border:1px solid #c8d2dd"></div>
<svg class="a" style="left:1855px;top:370px" width="28" height="100" viewBox="0 0 28 100"><path d="M14 7 V81 M10 7 H18 M10 48 H18" stroke="#2a2a2a" stroke-width="1.8" fill="none"/><circle cx="14" cy="88.6" r="7.5" fill="#dfe4ea" stroke="#2a2a2a" stroke-width="1.9"/></svg>
<div class="a" style="left:1833px;top:849px;width:62px;height:62px;border-radius:50%;background:#0066cc;box-shadow:0 1px 4px rgba(0,0,0,0.25)"></div>
<svg class="a" style="left:1830px;top:845px" width="70" height="70" viewBox="0 0 70 70"><path d="M25.4 28.6 Q25.6 21.3 33.9 21.1 Q41.6 21.3 41.8 28.3 Q41.8 32.2 37.6 35.3 Q34 38.2 34 41.6" fill="none" stroke="#fff" stroke-width="5.2" stroke-linecap="round"/><circle cx="34" cy="49.4" r="3.4" fill="#fff"/></svg>
<div class="a" style="left:1110px;top:849px;width:31px;height:56px;border-radius:0 13px 13px 0;background:#eaeff4;border:1px solid #c8d2dd;border-left:none"></div>
<svg class="a" style="left:1117px;top:868px" width="16" height="18" viewBox="0 0 16 18"><path d="M11 1.5 L4.5 9 L11 16.5" fill="none" stroke="#111" stroke-width="2"/></svg>
<div class="a" style="left:1899px;top:153px;width:21px;height:825px;background:#f1f1f1"></div>
<div class="a" style="left:1901px;top:174px;width:17px;height:708px;background:#c1c1c1"></div>
<div class="a" style="left:1904.5px;top:161px;width:0;height:0;border-left:5px solid transparent;border-right:5px solid transparent;border-bottom:5.5px solid #a3a3a3"></div>
<div class="a" style="left:1904.5px;top:963px;width:0;height:0;border-left:5px solid transparent;border-right:5px solid transparent;border-top:5.5px solid #505050"></div>
<div class="a" style="left:300px;top:978px;width:1620px;height:21px;background:#f1f1f1"></div>
<div class="a" style="left:321px;top:980px;width:291px;height:17px;background:#c1c1c1"></div>
<div class="a" style="left:307px;top:983.5px;width:0;height:0;border-top:5px solid transparent;border-bottom:5px solid transparent;border-right:5.5px solid #a3a3a3"></div>
<div class="a" style="left:1101px;top:983.5px;width:0;height:0;border-top:5px solid transparent;border-bottom:5px solid transparent;border-left:5.5px solid #505050"></div>
<div class="a" style="left:1110px;top:978px;width:1px;height:21px;background:#c9d1db"></div>
<div class="a" style="left:1405px;top:980px;width:399px;height:17px;background:#c1c1c1"></div>
<div class="a" style="left:1119px;top:983.5px;width:0;height:0;border-top:5px solid transparent;border-bottom:5px solid transparent;border-right:5.5px solid #505050"></div>
<div class="a" style="left:1886px;top:983.5px;width:0;height:0;border-top:5px solid transparent;border-bottom:5px solid transparent;border-left:5.5px solid #505050"></div>
<div class="a" style="left:1899px;top:978px;width:21px;height:21px;background:#dcdcdc"></div>
</body></html>
